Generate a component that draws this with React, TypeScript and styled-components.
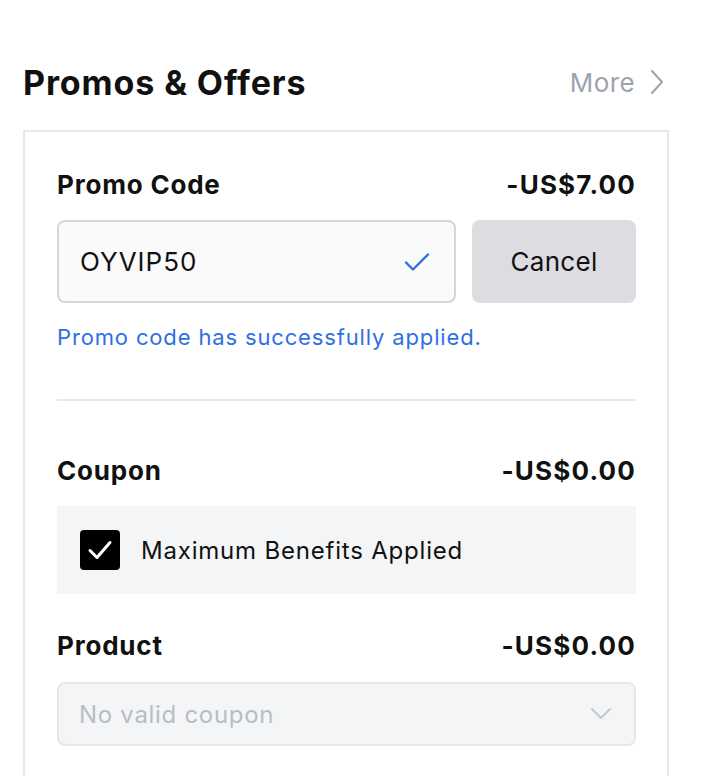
import React from 'react'
import styled, { createGlobalStyle } from 'styled-components'

const GlobalStyle = createGlobalStyle`
  body {
    margin: 0;
    background: #ffffff;
    font-family: Inter, 'Noto Sans', sans-serif;
    color: #111111;
  }
`

type Row = { label: string; amount: string }

function App() {
  return (
    <>
      <GlobalStyle />
      <Page>
        <Header>
          <Title>Promos &amp; Offers</Title>
          <More>
            More
            <svg width="16" height="26" viewBox="0 0 16 26" fill="none">
              <path d="M3 2l10 11L3 24" stroke="#9ca3af" strokeWidth="2" strokeLinecap="round" strokeLinejoin="round" />
            </svg>
          </More>
        </Header>

        <Card>
          <Section>
            <LineHead label="Promo Code" amount="-US$7.00" />
            <InputRow>
              <CodeBox>
                <span>OYVIP50</span>
                <svg width="26" height="20" viewBox="0 0 26 20" fill="none">
                  <path d="M2 10.5l7 7L24 2.5" stroke="#2f6fe4" strokeWidth="2.4" strokeLinecap="round" strokeLinejoin="round" />
                </svg>
              </CodeBox>
              <CancelButton>Cancel</CancelButton>
            </InputRow>
            <Success>Promo code has successfully applied.</Success>
          </Section>

          <Divider />

          <Section $top={53}>
            <LineHead label="Coupon" amount="-US$0.00" />
            <CheckPanel>
              <CheckBox>
                <svg width="26" height="22" viewBox="0 0 26 22" fill="none">
                  <path d="M3 11.5l7 7L23 3.5" stroke="#ffffff" strokeWidth="3" strokeLinecap="round" strokeLinejoin="round" />
                </svg>
              </CheckBox>
              <CheckLabel>Maximum Benefits Applied</CheckLabel>
            </CheckPanel>
          </Section>

          <Section $top={35}>
            <LineHead label="Product" amount="-US$0.00" />
            <Select>
              <span>No valid coupon</span>
              <svg width="22" height="14" viewBox="0 0 22 14" fill="none">
                <path d="M2 2l9 9 9-9" stroke="#c4c7cc" strokeWidth="2" strokeLinecap="round" strokeLinejoin="round" />
              </svg>
            </Select>
          </Section>
        </Card>
      </Page>
    </>
  )
}

function LineHead({ label, amount }: Row) {
  return (
    <Head>
      <Label>{label}</Label>
      <Amount>{amount}</Amount>
    </Head>
  )
}

const Page = styled.div`
  width: 720px;
  height: 776px;
  overflow: hidden;
  padding: 56px 51px 0 23px;
  box-sizing: border-box;
`

const Header = styled.div`
  display: flex;
  justify-content: space-between;
  align-items: center;
  height: 52px;
`

const Title = styled.h2`
  margin: 0;
  font-size: 34px;
  font-weight: 700;
  letter-spacing: 0.9px;
  color: #111111;
`

const More = styled.div`
  display: flex;
  align-items: center;
  gap: 14px;
  font-size: 26px;
  letter-spacing: 0.4px;
  color: #9ca3af;
  padding-right: 4px;
`

const Card = styled.div`
  margin-top: 22px;
  border: 2px solid #e5e7eb;
  border-bottom: none;
  padding: 36px 31px 40px 32px;
  min-height: 700px;
`

const Section = styled.div<{ $top?: number }>`
  padding-top: ${({ $top }) => $top || 0}px;
`

const Head = styled.div`
  display: flex;
  justify-content: space-between;
  align-items: center;
  height: 32px;
`

const Label = styled.div`
  font-size: 26px;
  font-weight: 700;
  letter-spacing: 0.8px;
  color: #111111;
`

const Amount = styled.div`
  font-size: 26px;
  font-weight: 700;
  letter-spacing: 1.2px;
  color: #111111;
`

const InputRow = styled.div`
  display: flex;
  gap: 16px;
  margin-top: 20px;
  height: 83px;
`

const CodeBox = styled.div`
  flex: 1;
  display: flex;
  align-items: center;
  justify-content: space-between;
  padding: 0 24px 0 21px;
  border: 2px solid #d4d6da;
  border-radius: 8px;
  background: #fafafa;
  font-size: 26px;
  letter-spacing: 1px;
  color: #111111;
`

const CancelButton = styled.button`
  width: 164px;
  border: none;
  border-radius: 8px;
  background: #dcdde0;
  font-family: inherit;
  font-size: 26px;
  letter-spacing: 0.3px;
  color: #111111;
`

const Success = styled.div`
  margin-top: 21px;
  font-size: 22px;
  letter-spacing: 0.85px;
  color: #2f6fe4;
`

const Divider = styled.div`
  margin-top: 49px;
  height: 2px;
  background: #e5e7eb;
`

const CheckPanel = styled.div`
  margin-top: 20px;
  display: flex;
  align-items: center;
  gap: 21px;
  height: 88px;
  padding: 0 23px;
  background: #f4f5f7;
`

const CheckBox = styled.div`
  width: 40px;
  height: 40px;
  border-radius: 4px;
  background: #000000;
  display: flex;
  align-items: center;
  justify-content: center;
`

const CheckLabel = styled.div`
  font-size: 24px;
  letter-spacing: 0.8px;
  color: #111111;
`

const Select = styled.div`
  margin-top: 21px;
  height: 64px;
  box-sizing: border-box;
  display: flex;
  align-items: center;
  justify-content: space-between;
  padding: 0 22px 0 20px;
  border: 2px solid #e5e7eb;
  border-radius: 8px;
  background: #f4f5f7;
  font-size: 24px;
  letter-spacing: 0.7px;
  color: #b9bdc3;
`

export default App
